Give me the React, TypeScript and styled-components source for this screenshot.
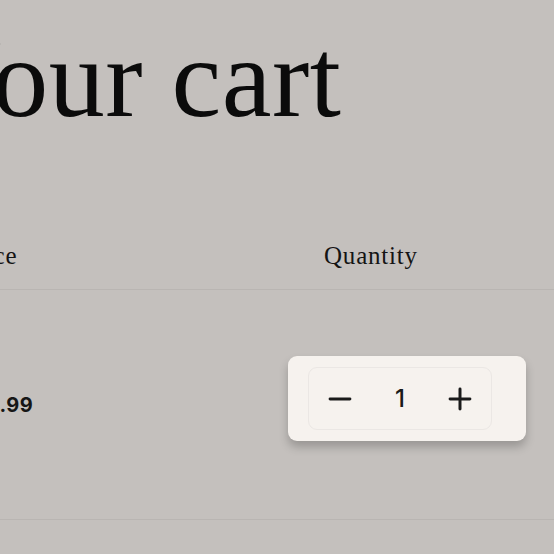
import styled, { createGlobalStyle } from "styled-components";
import { Minus, Plus } from "lucide-react";

const GlobalStyle = createGlobalStyle`
  html, body {
    margin: 0;
    padding: 0;
    background: #c4c0bd;
    overflow: hidden;
  }
`;

const Page = styled.main`
  width: 554px;
  height: 554px;
  overflow: hidden;
  background: #c4c0bd;
`;

const Inner = styled.div`
  margin-left: -400px;
  width: 1100px;
`;

const Heading = styled.h1`
  margin: 0;
  padding-top: 22px;
  font-family: "Liberation Serif", "Times New Roman", serif;
  font-weight: 400;
  font-size: 112px;
  line-height: 112px;
  color: #0b0b0b;
  letter-spacing: 0.5px;
  padding-left: 322px;
`;

const HeaderRow = styled.div`
  display: grid;
  grid-template-columns: 362px 326px 1fr;
  margin-top: 108px;
  padding-bottom: 19px;
  border-bottom: 1px solid #b9b5b2;
`;

const HeaderCell = styled.div<{ $indent?: number }>`
  font-family: "Liberation Serif", "Times New Roman", serif;
  font-size: 25px;
  line-height: 28px;
  letter-spacing: 0.8px;
  color: #141414;
  padding-left: ${(p) => p.$indent ?? 0}px;
`;

const ItemRow = styled.div`
  display: grid;
  grid-template-columns: 360px 328px 1fr;
  align-items: center;
  height: 229px;
  border-bottom: 1px solid #b9b5b2;
`;

const Price = styled.div`
  font-family: Inter, "Liberation Sans", sans-serif;
  font-weight: 700;
  font-size: 20px;
  letter-spacing: 0.4px;
  color: #161616;
`;

const QtyCard = styled.div`
  width: 238px;
  height: 85px;
  box-sizing: border-box;
  padding: 11px 34px 11px 20px;
  background: #f6f2ee;
  border-radius: 9px;
  box-shadow: 0 6px 10px rgba(0, 0, 0, 0.22);
  margin-top: -12px;
`;

const Stepper = styled.div`
  display: grid;
  grid-template-columns: repeat(3, 60px);
  height: 100%;
  box-sizing: border-box;
  padding: 0 1px;
  border: 1px solid #ebe7e4;
  border-radius: 9px;
  align-items: center;
`;

const StepButton = styled.button`
  display: flex;
  align-items: center;
  justify-content: center;
  background: none;
  border: none;
  padding: 0;
  height: 100%;
  color: #1a1a1a;
  cursor: pointer;
`;

const Count = styled.span`
  text-align: center;
  font-family: Inter, "Liberation Sans", sans-serif;
  font-size: 24px;
  font-weight: 500;
  color: #1a1a1a;
`;

const App = () => {
  return (
    <Page>
      <GlobalStyle />
      <Inner>
        <Heading>Your cart</Heading>
        <HeaderRow>
          <HeaderCell />
          <HeaderCell>Price</HeaderCell>
          <HeaderCell $indent={36}>Quantity</HeaderCell>
        </HeaderRow>
        <ItemRow>
          <div />
          <Price>$24.99</Price>
          <QtyCard>
            <Stepper>
              <StepButton aria-label="Decrease">
                <Minus size={34} strokeWidth={2.1} />
              </StepButton>
              <Count>1</Count>
              <StepButton aria-label="Increase">
                <Plus size={34} strokeWidth={2.1} />
              </StepButton>
            </Stepper>
          </QtyCard>
        </ItemRow>
      </Inner>
    </Page>
  );
};

export default App;
